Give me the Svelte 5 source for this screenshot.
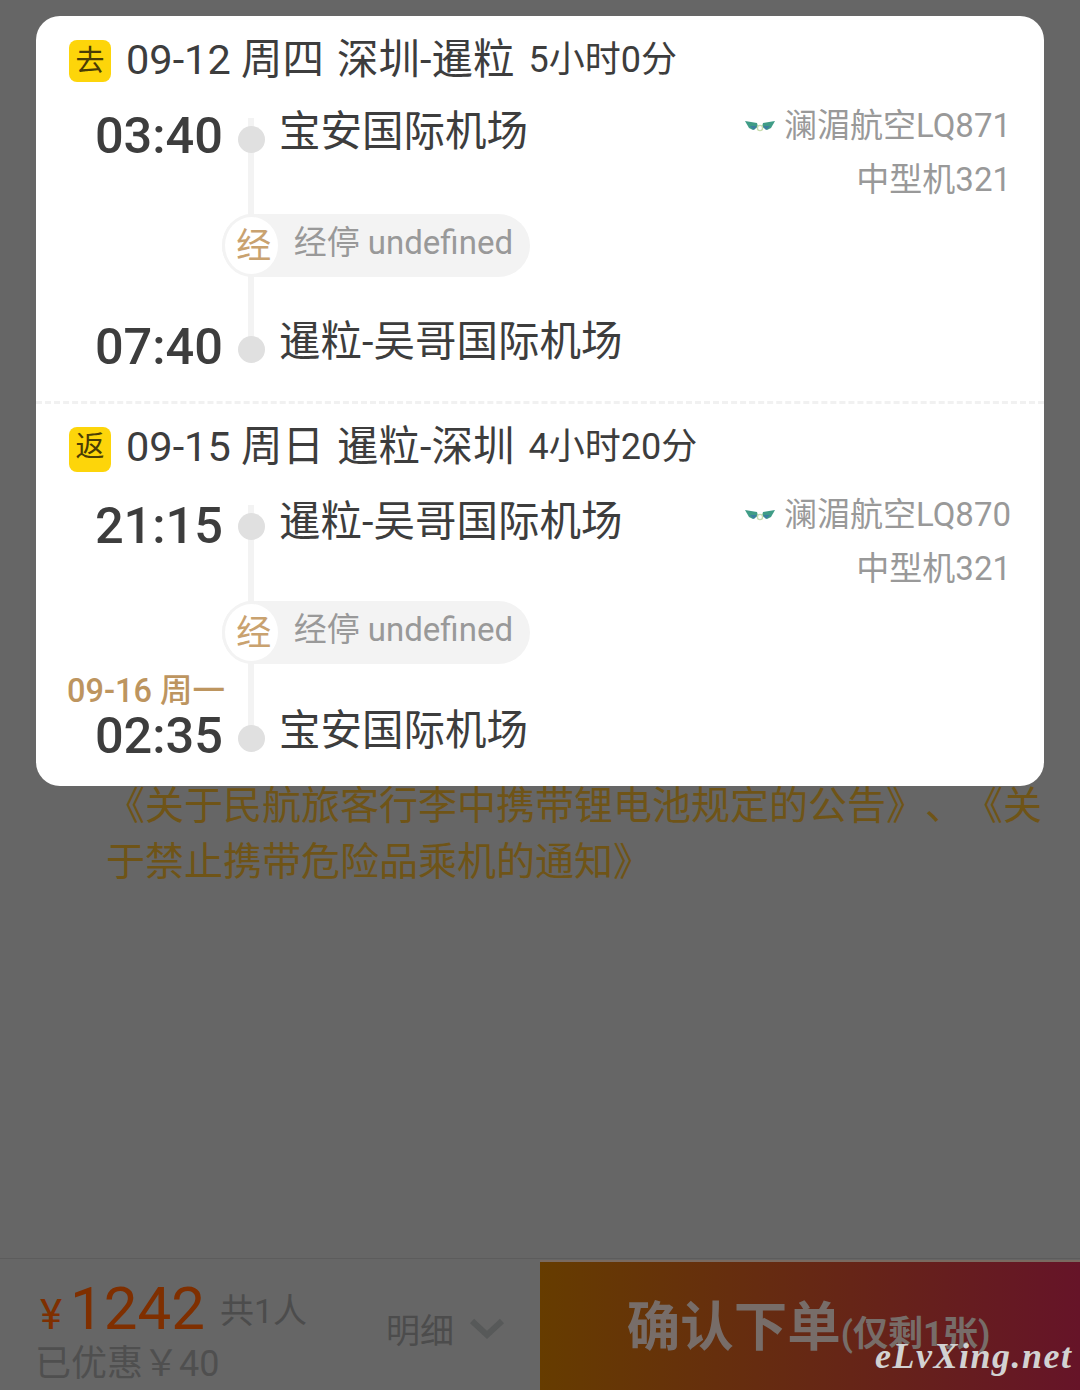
<script>
    const trips = [
        {
            tag: '去',
            date: '09-12 周四',
            route: '深圳-暹粒',
            duration: '5小时0分',
            flight: '澜湄航空LQ871',
            plane: '中型机321',
            from: { time: '03:40', name: '宝安国际机场' },
            to: { time: '07:40', name: '暹粒-吴哥国际机场' }
        },
        {
            tag: '返',
            date: '09-15 周日',
            route: '暹粒-深圳',
            duration: '4小时20分',
            flight: '澜湄航空LQ870',
            plane: '中型机321',
            from: { time: '21:15', name: '暹粒-吴哥国际机场' },
            to: { time: '02:35', name: '宝安国际机场', extra: '09-16 周一' }
        }
    ];
</script>

<div class="page">
    <p class="notice">《关于民航旅客行李中携带锂电池规定的公告》、《关于禁止携带危险品乘机的通知》</p>

    <div class="footer">
        <div class="summary">
            <div class="amounts">
                <div class="price-row">
                    <span class="yen">¥</span>
                    <span class="price">1242</span>
                    <span class="people">共1人</span>
                </div>
                <div class="saved">已优惠￥40</div>
            </div>
            <div class="detail">
                <span>明细</span>
                <svg width="34" height="22" viewBox="0 0 34 22">
                    <path d="M2 3 L17 17 L32 3" fill="none" stroke="#575959" stroke-width="6" />
                </svg>
            </div>
        </div>
        <div class="submit">确认下单<small>(仅剩1张)</small></div>
    </div>

    <div class="card">
        {#each trips as trip, i}
            <section class:first={i === 0}>
                <header>
                    <span class="tag">{trip.tag}</span>
                    <span class="date">{trip.date}</span>
                    <span class="route">{trip.route}</span>
                    <span class="duration">{trip.duration}</span>
                </header>
                <div class="timeline">
                    <div class="line"></div>

                    <div class="time start">{trip.from.time}</div>
                    <div class="dot start"></div>
                    <div class="name start">{trip.from.name}</div>
                    <div class="flight">
                        <div class="flight-no">
                            <svg width="30" height="16" viewBox="0 0 30 16">
                                <path d="M0 3 L12 5 L13 9 L8 12 L4 10 Z" fill="#3f9c86" />
                                <path d="M30 3 L18 5 L17 9 L22 12 L26 10 Z" fill="#3f9c86" />
                                <path d="M5 8 L12 8 L9 12 Z M25 8 L18 8 L21 12 Z" fill="#3b7fa0" />
                                <circle cx="15" cy="10" r="2.6" fill="none" stroke="#c8dcae" stroke-width="1.4" />
                            </svg>
                            <span>{trip.flight}</span>
                        </div>
                        <div class="plane">{trip.plane}</div>
                    </div>

                    <div class="stop">
                        <span class="stop-mark">经</span>
                        <span class="stop-text">经停 undefined</span>
                    </div>

                    <div class="time end">
                        {#if trip.to.extra}<div class="extra">{trip.to.extra}</div>{/if}
                        {trip.to.time}
                    </div>
                    <div class="dot end"></div>
                    <div class="name end">{trip.to.name}</div>
                </div>
            </section>
        {/each}
    </div>

    <div class="watermark">eLvXing.net</div>
</div>

<style>
    :global(body) {
        margin: 0;
        background: #666;
    }

    .page {
        position: relative;
        display: flex;
        flex-direction: column;
        box-sizing: border-box;
        width: 1080px;
        height: 1390px;
        padding-top: 778px;
        overflow: hidden;
        background: #666;
        font-family: Roboto, "Noto Sans CJK SC", sans-serif;
        color: #3d3d3d;
    }

    .notice {
        margin: 0;
        padding: 0 36px 0 106px;
        font-size: 39px;
        line-height: 56px;
        text-spacing-trim: space-all;
        color: #6f5417;
    }

    /* bottom bar */
    .footer {
        display: flex;
        margin-top: auto;
        height: 132px;
        border-top: 1px solid #5c5c5c;
        box-sizing: border-box;
    }

    .summary {
        display: flex;
        align-items: center;
        width: 540px;
    }

    .amounts {
        padding-left: 35px;
        width: 386px;
        box-sizing: border-box;
    }

    .price-row {
        display: flex;
        align-items: baseline;
        height: 68px;
        margin-top: 11px;
    }

    .yen {
        margin-left: 5px;
        width: 30px;
        font-size: 42px;
        color: #7f2f00;
    }

    .price {
        font-size: 60px;
        line-height: 68px;
        color: #7f2f00;
    }

    .people {
        position: relative;
        top: -6px;
        margin-left: 15px;
        font-size: 34px;
        color: #4c4c4c;
    }

    .saved {
        font-size: 36px;
        line-height: 42px;
        color: #4f4f4f;
    }

    .detail {
        display: flex;
        align-items: center;
        gap: 16px;
        margin-top: 8px;
        font-size: 34px;
        color: #4c4c4c;
    }

    .submit {
        display: flex;
        align-items: baseline;
        justify-content: center;
        flex: 1;
        margin-top: 1px;
        padding: 22px 3px 0 0;
        box-sizing: border-box;
        background: linear-gradient(90deg, #663c00, #661428);
        border-top: 2px solid #7a6a60;
        font-size: 53.5px;
        font-weight: 700;
        color: #776d69;
    }

    .submit small {
        font-size: 35px;
    }

    /* overlay card */
    .card {
        position: absolute;
        left: 36px;
        top: 16px;
        width: 1008px;
        height: 770px;
        background: #fff;
        border-radius: 24px;
    }

    section {
        padding: 24px 33px 0 33px;
    }

    section.first {
        height: 388px;
        box-sizing: border-box;
        border-bottom: 3px dashed #f1f1f1;
    }

    section:not(.first) {
        padding-top: 23px;
    }

    header {
        display: flex;
        align-items: center;
        height: 42px;
        white-space: nowrap;
    }

    section:not(.first) header {
        height: 45px;
    }

    .tag {
        display: flex;
        align-items: center;
        justify-content: center;
        box-sizing: border-box;
        width: 42px;
        height: 100%;
        padding-bottom: 6px;
        margin-right: 15px;
        border-radius: 8px;
        background: #fdd50a;
        font-size: 29px;
        color: #4a3c05;
    }

    section:not(.first) .tag {
        padding-bottom: 11px;
    }

    .date,
    .route {
        padding-bottom: 10px;
        font-size: 41.5px;
    }

    .date {
        margin-right: 13px;
    }

    .route {
        margin-right: 14px;
    }

    .duration {
        padding-bottom: 10px;
        font-size: 36px;
    }

    section:not(.first) .date,
    section:not(.first) .route,
    section:not(.first) .duration {
        padding-bottom: 14px;
    }

    .timeline {
        display: grid;
        grid-template-columns: 153px 58px 1fr auto;
        grid-template-rows: 96px 63px 93px;
        margin-top: 36px;
    }

    section:not(.first) .timeline {
        grid-template-rows: 96px 63px 95px;
        margin-top: 33px;
    }

    .line {
        grid-column: 2;
        grid-row: 1 / 4;
        justify-self: center;
        width: 6px;
        margin-bottom: 22px;
        background: #f3f3f3;
    }

    .time {
        grid-column: 1;
        justify-self: end;
        margin-right: -1px;
        font-size: 50.5px;
        font-weight: 500;
        line-height: 54px;
        text-align: right;
    }

    .time.start {
        grid-row: 1;
        margin-top: -9px;
    }

    section:not(.first) .time.start {
        margin-top: -6px;
    }

    .time.end {
        grid-row: 3;
        align-self: end;
        margin-bottom: -4px;
    }

    .extra {
        margin-right: -2px;
        padding-top: 1px;
        font-size: 32.5px;
        line-height: 35px;
        white-space: nowrap;
        color: #bd955f;
    }

    .dot {
        grid-column: 2;
        justify-self: center;
        width: 27px;
        height: 27px;
        border-radius: 50%;
        background: #e0e0e0;
        z-index: 1;
    }

    .dot.start {
        grid-row: 1;
        margin-top: 8px;
    }

    .dot.end {
        grid-row: 3;
        align-self: end;
        margin-bottom: 7px;
    }

    .name {
        grid-column: 3;
        margin-left: -1px;
        font-size: 41.5px;
        line-height: 56px;
        white-space: nowrap;
    }

    .name.start {
        grid-row: 1;
        margin-top: -14px;
    }

    section:not(.first) .name.start {
        margin-top: -11px;
    }

    .name.end {
        grid-row: 3;
        align-self: end;
    }

    .flight {
        grid-column: 4;
        grid-row: 1;
        margin-top: -19px;
        font-size: 33px;
        line-height: 54px;
        text-align: right;
        color: #999;
    }

    section:not(.first) .flight {
        margin-top: -17px;
    }

    .flight-no {
        display: flex;
        align-items: center;
        gap: 9px;
    }

    .stop {
        grid-column: 1 / 5;
        grid-row: 2;
        display: flex;
        align-items: center;
        justify-self: start;
        box-sizing: border-box;
        width: 308px;
        height: 63px;
        margin-left: 153px;
        padding-right: 17px;
        border-radius: 32px;
        background: #f3f3f3;
        z-index: 1;
    }

    .stop-mark {
        display: flex;
        align-items: center;
        justify-content: center;
        box-sizing: border-box;
        width: 63px;
        height: 63px;
        margin-right: 13px;
        padding: 0 0 6px 5px;
        border: 3px solid #f3f3f3;
        border-radius: 50%;
        background: #fff;
        font-size: 35px;
        color: #c9a26f;
    }

    .stop-text {
        padding-bottom: 12px;
        font-size: 33px;
        white-space: nowrap;
        color: #999;
    }

    .watermark {
        position: absolute;
        left: 875px;
        top: 1335px;
        font-family: "Liberation Serif", serif;
        font-style: italic;
        font-weight: 700;
        font-size: 36px;
        letter-spacing: 1.5px;
        color: #d2d2d2;
        white-space: nowrap;
    }
</style>
